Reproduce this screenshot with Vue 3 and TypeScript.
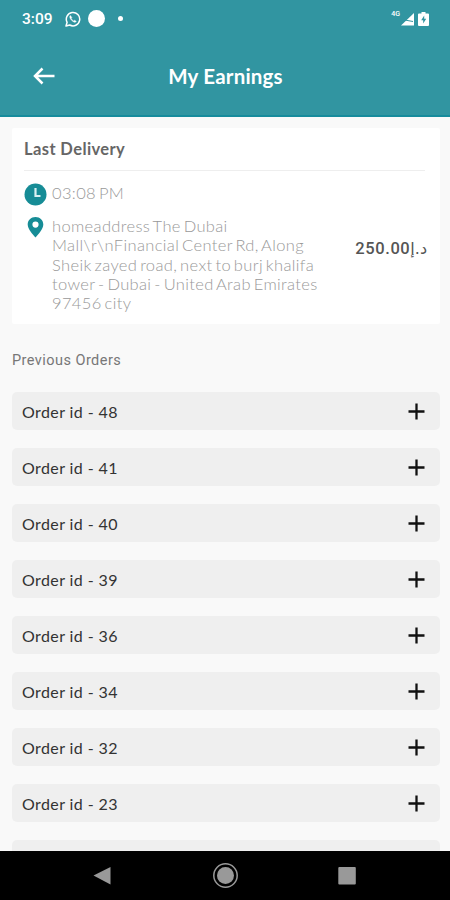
<script setup lang="ts">
const orders: number[] = [48, 41, 40, 39, 36, 34, 32, 23]
const addressLines: string[] = [
  'homeaddress The Dubai',
  'Mall\\r\\nFinancial Center Rd, Along',
  'Sheik zayed road, next to burj khalifa',
  'tower - Dubai - United Arab Emirates',
  '97456 city',
]
</script>

<template>
  <div class="screen">
    <header class="header">
      <div class="status">
        <span class="clock">3:09</span>
        <svg class="whatsapp" viewBox="0 0 16 16" fill="none" stroke="#fff">
          <path d="M1 15l1.100-3.700A6.700 6.700 0 1 1 4.700 14z" stroke-width="1.500" stroke-linejoin="round" />
          <path d="M5.400 4.600c-.7.6-.8 1.500-.3 2.500.8 1.800 2.100 3.100 3.900 3.900.9.4 1.800.2 2.300-.6l-1.700-1.100-.9.7C7.500 9.400 6.700 8.600 6.200 7.500l.6-.9z" fill="#fff" stroke-width=".5" />
        </svg>
        <span class="disc"></span>
        <span class="dot"></span>
        <span class="spacer"></span>
        <span class="network">4G</span>
        <svg class="signal" viewBox="0 0 13 14"><path d="M0 13.500L13 1v12.500z" fill="#fff" /><path d="M1 7.500l11 2" stroke="#3195a1" stroke-width="1" /></svg>
        <svg class="battery" viewBox="0 0 11 14"><path d="M3.500 0h4v1.500H10q1 0 1 1V13q0 1-1 1H1q-1 0-1-1V2.500q0-1 1-1h2.500z" fill="#fff" /><path d="M6.200 3.600L3.200 8.300h2v3.200l3-4.800h-2z" fill="#3195a1" /></svg>
      </div>
      <div class="toolbar">
        <svg class="back" viewBox="0 0 22 18" fill="none" stroke="#fff" stroke-width="2.500"><path d="M21.500 9H2M9.500 1.500L2 9l7.500 7.500" /></svg>
        <h1>My Earnings</h1>
      </div>
    </header>

    <main class="content">
      <section class="card">
        <h2>Last Delivery</h2>
        <div class="row time">
          <svg class="icon" viewBox="0 0 23 23"><circle cx="11.500" cy="11.500" r="11" fill="#168c96" /><path d="M11.500 5v8h5" fill="none" stroke="#d9f1f2" stroke-width="2.200" /></svg>
          <span class="light">03:08 PM</span>
        </div>
        <div class="row place">
          <svg class="icon pin" viewBox="0 0 23 23"><path fill-rule="evenodd" d="M11.500 1C7 1 3.700 4.200 3.700 8.500c0 4.700 5 9.600 7.800 13 2.800-3.400 7.800-8.300 7.800-13C19.300 4.200 16 1 11.500 1zm0 4.500a3.100 3.100 0 1 1 0 6.200 3.100 3.100 0 0 1 0-6.200z" fill="#168c96" /></svg>
          <p class="light address"><span v-for="line in addressLines" :key="line">{{ line }}</span></p>
          <div class="price"><b>250.00</b><bdi dir="rtl">د.إ</bdi></div>
        </div>
      </section>

      <h3>Previous Orders</h3>
      <ul class="orders">
        <li v-for="id in orders" :key="id">
          <span>Order id - {{ id }}</span>
          <svg viewBox="0 0 17 17" stroke="#111" stroke-width="2.300"><path d="M8.500 .5v16M.5 8.500h16" /></svg>
        </li>
        <li></li>
      </ul>
    </main>

    <nav class="nav">
      <svg viewBox="0 0 26 26"><path d="M3.500 12.500L20.500 4v17.500z" fill="#999" /></svg>
      <svg viewBox="0 0 26 26"><circle cx="13.500" cy="12.500" r="11.700" fill="none" stroke="#999" stroke-width="1.500" /><circle cx="13.500" cy="12.500" r="8.500" fill="#999" /></svg>
      <svg viewBox="0 0 26 26"><rect x="4.300" y="4" width="17.500" height="17.500" rx="1" fill="#999" /></svg>
    </nav>
  </div>
</template>

<style>
body { margin: 0; }
</style>

<style scoped>
.screen {
  width: 450px;
  height: 900px;
  display: flex;
  flex-direction: column;
  overflow: hidden;
  background: #f9f9f9;
  font-family: Lato, "Liberation Sans", sans-serif;
}
.header {
  height: 117px;
  flex: none;
  box-sizing: border-box;
  background: #3195a1;
  border-bottom: 2px solid #168b9c;
  color: #fff;
}
.status {
  height: 37px;
  display: flex;
  align-items: center;
  padding: 0 21px 0 22px;
}
.clock { font: 500 15.500px Roboto, sans-serif; width: 43px; }
.whatsapp { width: 16px; height: 16px; margin-right: 7px; }
.disc { width: 17px; height: 17px; border-radius: 50%; background: #fff; }
.dot { width: 5px; height: 5px; border-radius: 50%; background: #fff; margin-left: 13px; }
.spacer { flex: 1; }
.network { font: 500 7px Roboto, sans-serif; align-self: flex-start; margin: 10px 1px 0 0; }
.signal { width: 13px; height: 14px; margin-right: 4px; }
.battery { width: 11px; height: 14px; }
.toolbar {
  height: 78px;
  display: grid;
  grid-template-columns: 55px 1fr 54px;
  align-items: center;
}
.back { width: 22px; height: 18px; justify-self: end; }
h1 { margin: 0; text-align: center; font-size: 20.500px; letter-spacing: .2px; line-height: 24px; font-weight: 700; }
.content { flex: 1; min-height: 0; overflow: hidden; padding: 11px 10px 0 12px; }
.card { height: 196px; box-sizing: border-box; background: #fff; border-radius: 2px; padding: 0 15px 0 12px; }
h2 {
  margin: 0;
  height: 43px;
  box-sizing: border-box;
  border-bottom: 1px solid #eee;
  font-size: 16.500px;
  letter-spacing: .4px;
  line-height: 42px;
  color: #666;
}
.row { display: flex; align-items: flex-start; }
.icon { width: 23px; height: 23px; flex: none; margin-right: 5px; }
.time { height: 45px; padding-top: 12px; box-sizing: border-box; }
.time .light { line-height: 20px; }
.light { font-size: 16.500px; letter-spacing: .35px; word-spacing: -1.900px; font-weight: 300; color: #999; white-space: nowrap; }
.address { margin: 0; width: 290px; line-height: 19.300px; padding-top: 1px; }
.address span { display: block; }
.price { flex: 1; display: flex; align-items: center; justify-content: flex-end; height: 64px; color: #555; white-space: nowrap; margin-right: -2px; }
.price b { font: 500 16.500px Roboto, sans-serif; letter-spacing: .6px; }
.price bdi { font: 16px "DejaVu Sans", sans-serif; }
h3 { margin: 27px 0 21.400px; font: 400 14.500px/20px Roboto, sans-serif; color: #777; letter-spacing: .45px; }
.orders { list-style: none; margin: 0; padding: 0; display: flex; flex-direction: column; gap: 18px; }
li {
  height: 38px;
  flex: none;
  display: flex;
  align-items: center;
  justify-content: space-between;
  box-sizing: border-box;
  padding: 0 15px 0 10px;
  border-radius: 5px;
  background: #efefef;
  font-size: 16px;
  letter-spacing: .4px;
  color: #333;
}
li svg { width: 17px; height: 17px; }
.nav {
  height: 49px;
  flex: none;
  background: #000;
  display: flex;
  align-items: center;
  justify-content: space-between;
  padding: 0 90px;
}
.nav svg { width: 26px; height: 26px; }
</style>
